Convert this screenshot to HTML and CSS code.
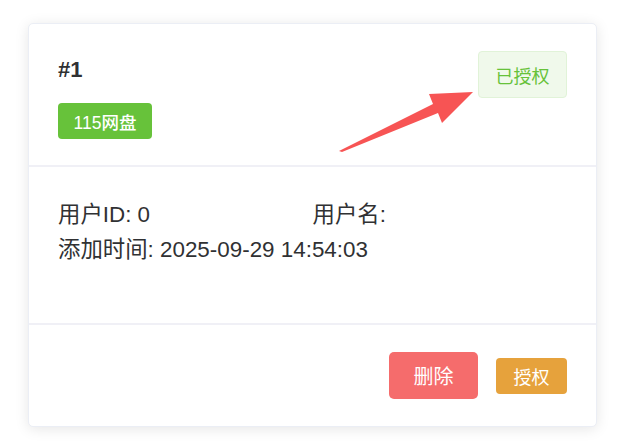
FILE: index.html
```html
<!DOCTYPE html>
<html lang="zh-CN">
<head>
<meta charset="utf-8">
<link rel="stylesheet" href="styles.css">
</head>
<body>
<div class="card">
  <div class="card-header">
    <div class="head-left">
      <div class="title">#1</div>
      <span class="tag">115网盘</span>
    </div>
    <span class="badge">已授权</span>
  </div>
  <div class="card-body">
    <div class="info">用户ID: 0</div>
    <div class="info">用户名:</div>
    <div class="info wide">添加时间: 2025-09-29 14:54:03</div>
  </div>
  <div class="card-footer">
    <button class="btn btn-danger">删除</button>
    <button class="btn btn-warning">授权</button>
  </div>
</div>
<svg class="arrow" width="621" height="447" viewBox="0 0 621 447">
  <polygon points="339,151 433,104 429,94 473,92 442,123 438,113 342,152" fill="#f75454"/>
</svg>
</body>
</html>
```
FILE: styles.css
```css
html, body {
  margin: 0;
  padding: 0;
  background: #ffffff;
}
body {
  position: relative;
  width: 621px;
  height: 447px;
  overflow: hidden;
  padding: 23px 0 0 28px;
  box-sizing: border-box;
  font-family: "Liberation Sans", "Noto Sans CJK SC", sans-serif;
  color: #303133;
}
.card {
  width: 569px;
  box-sizing: border-box;
  background: #fff;
  border: 1px solid #ebeef5;
  border-radius: 5px;
  box-shadow: 0 2px 14px 0 rgba(0, 0, 0, 0.1);
}
.card-header {
  display: flex;
  justify-content: space-between;
  align-items: flex-start;
  padding: 27px 29px 26px 29px;
  border-bottom: 2px solid #f0f0f6;
}
.head-left {
  display: flex;
  flex-direction: column;
  align-items: flex-start;
}
.title {
  font-size: 22px;
  font-weight: bold;
  line-height: 38px;
  margin-bottom: 14px;
  color: #303133;
}
.tag {
  display: inline-flex;
  align-items: center;
  justify-content: center;
  height: 36px;
  width: 94px;
  box-sizing: border-box;
  background: #67c23a;
  color: #fff;
  font-size: 17.5px;
  font-weight: 500;
  border-radius: 4px;
}
.badge {
  display: inline-flex;
  align-items: center;
  justify-content: center;
  width: 89px;
  height: 47px;
  box-sizing: border-box;
  background: #f0f9eb;
  border: 1px solid #e1f3d8;
  color: #67c23a;
  font-size: 18px;
  border-radius: 4px;
}
.card-body {
  display: grid;
  grid-template-columns: 1fr 1fr;
  padding: 30px 29px 56px 29px;
  border-bottom: 2px solid #f0f0f6;
  font-size: 22.4px;
  line-height: 35px;
  color: #303133;
}
.info.wide {
  grid-column: 1 / -1;
}
.card-footer {
  display: flex;
  justify-content: flex-end;
  align-items: center;
  gap: 18px;
  padding: 27px 29px 27px 29px;
}
.btn {
  display: inline-flex;
  align-items: center;
  justify-content: center;
  border: none;
  color: #fff;
  font-family: "Liberation Sans", "Noto Sans CJK SC", sans-serif;
  border-radius: 4px;
  padding: 0;
  margin: 0;
}
.btn-danger {
  width: 89px;
  height: 47px;
  font-size: 20px;
  background: #f56c6c;
  border-radius: 5px;
}
.btn-warning {
  width: 71px;
  height: 36px;
  font-size: 18px;
  background: #e6a23c;
}
.arrow {
  position: absolute;
  left: 0;
  top: 0;
  pointer-events: none;
}
```
